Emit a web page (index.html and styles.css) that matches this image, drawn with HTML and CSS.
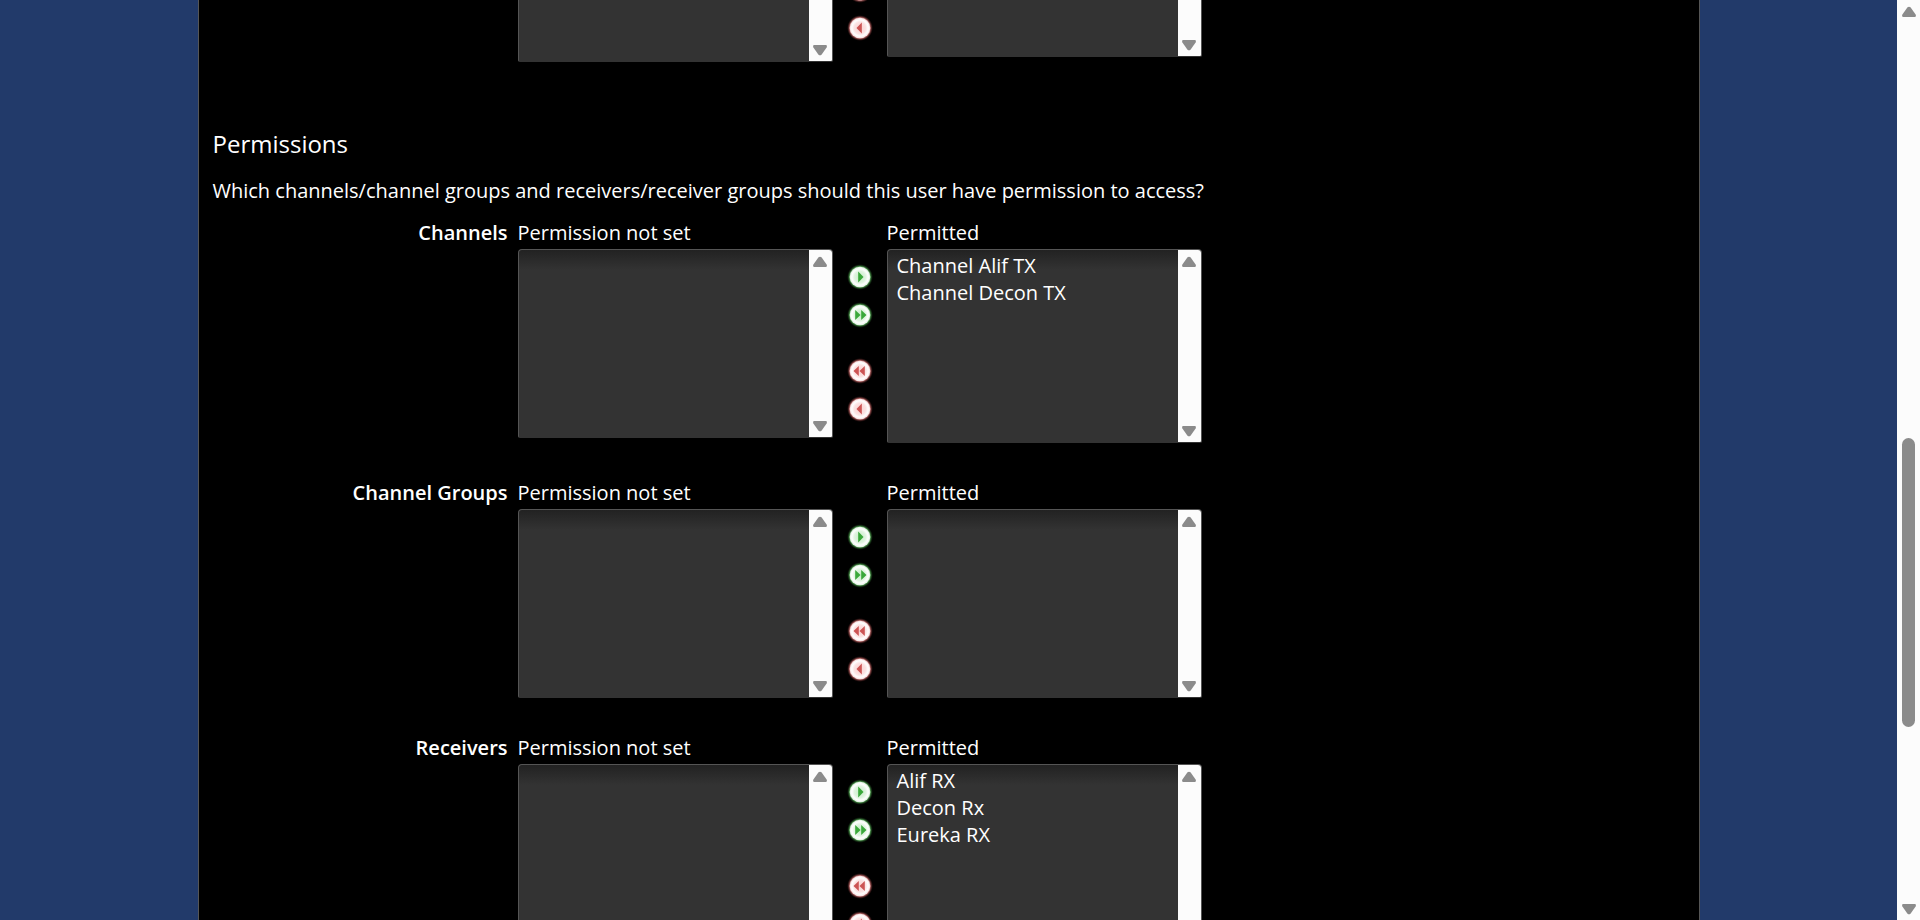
FILE: index.html
```html
<!DOCTYPE html>
<html lang="en">
<head>
<meta charset="utf-8">
<title>Permissions</title>
<link rel="stylesheet" href="styles.css">
</head>
<body>
<svg class="defs" aria-hidden="true">
  <defs>
    <radialGradient id="green-disc"><stop offset="0" stop-color="#c4ecc4"/><stop offset=".55" stop-color="#e0f4e0"/><stop offset=".8" stop-color="#ffffff"/><stop offset="1" stop-color="#dcecdc"/></radialGradient>
    <radialGradient id="red-disc"><stop offset="0" stop-color="#f8d2d2"/><stop offset=".55" stop-color="#fce2e2"/><stop offset=".8" stop-color="#ffffff"/><stop offset="1" stop-color="#f4dcdc"/></radialGradient>
    <radialGradient id="green-halo"><stop offset=".8" stop-color="#4c944c"/><stop offset="1" stop-color="#0a280a" stop-opacity="0"/></radialGradient>
    <radialGradient id="red-halo"><stop offset=".8" stop-color="#b06464"/><stop offset="1" stop-color="#3a0c0c" stop-opacity="0"/></radialGradient>
  </defs>
  <symbol id="add" viewBox="0 0 26 26"><circle cx="13" cy="13" r="13" fill="url(#green-halo)"/><circle cx="13" cy="13" r="10.3" fill="url(#green-disc)"/><path d="M11.2 7.600v10.800l5.300-5.400z" fill="#3aa83a"/></symbol>
  <symbol id="add-all" viewBox="0 0 26 26"><circle cx="13" cy="13" r="13" fill="url(#green-halo)"/><circle cx="13" cy="13" r="10.3" fill="url(#green-disc)"/><path d="M8.200 8v10l5.300-5zM14.200 8v10l5.300-5z" fill="#3aa83a"/></symbol>
  <symbol id="remove-all" viewBox="0 0 26 26"><circle cx="13" cy="13" r="13" fill="url(#red-halo)"/><circle cx="13" cy="13" r="10.3" fill="url(#red-disc)"/><path d="M11.800 8v10l-5.300-5zM17.800 8v10l-5.300-5z" fill="#cc5454"/></symbol>
  <symbol id="remove" viewBox="0 0 26 26"><circle cx="13" cy="13" r="13" fill="url(#red-halo)"/><circle cx="13" cy="13" r="10.3" fill="url(#red-disc)"/><path d="M14.800 7.600v10.800l-5.300-5.400z" fill="#cc5454"/></symbol>
  <symbol id="up" viewBox="0 0 16 12"><path d="M6.500 1.300Q8 0 9.500 1.300L14.600 8.600Q15.600 11 13.600 11H2.400Q.4 11 1.400 8.600Z" fill="#8b8b8b"/></symbol>
  <symbol id="down" viewBox="0 0 16 12"><path d="M6.500 10.700Q8 12 9.500 10.700L14.600 3.400Q15.600 1 13.600 1H2.400Q.4 1 1.400 3.400Z" fill="#8b8b8b"/></symbol>
</svg>
<div class="window">
  <div class="viewport">
    <main class="panel">
      <div class="row row-previous">
        <div class="listbox tall start">
          <select multiple aria-label="Available"></select>
          <span class="scrollbar"><svg><use href="#up"/></svg><svg><use href="#down"/></svg></span>
        </div>
        <div class="buttons">
          <button type="button" aria-label="Add"><svg><use href="#add"/></svg></button>
          <button type="button" aria-label="Add all"><svg><use href="#add-all"/></svg></button>
          <button type="button" class="apart" aria-label="Remove all"><svg><use href="#remove-all"/></svg></button>
          <button type="button" aria-label="Remove"><svg><use href="#remove"/></svg></button>
        </div>
        <div class="listbox">
          <select multiple aria-label="Selected"></select>
          <span class="scrollbar"><svg><use href="#up"/></svg><svg><use href="#down"/></svg></span>
        </div>
      </div>

      <h2>Permissions</h2>
      <p class="question">Which channels/channel groups and receivers/receiver groups should this user have permission to access?</p>

      <section class="row" aria-labelledby="channels">
        <h3 id="channels">Channels</h3>
        <label for="channels-unset">Permission not set</label>
        <label class="last" for="channels-set">Permitted</label>
        <div class="listbox start">
          <select id="channels-unset" multiple></select>
          <span class="scrollbar"><svg><use href="#up"/></svg><svg><use href="#down"/></svg></span>
        </div>
        <div class="buttons">
          <button type="button" aria-label="Add"><svg><use href="#add"/></svg></button>
          <button type="button" aria-label="Add all"><svg><use href="#add-all"/></svg></button>
          <button type="button" class="apart" aria-label="Remove all"><svg><use href="#remove-all"/></svg></button>
          <button type="button" aria-label="Remove"><svg><use href="#remove"/></svg></button>
        </div>
        <div class="listbox tall">
          <select id="channels-set" multiple><option>Channel Alif TX</option><option>Channel Decon TX</option></select>
          <span class="scrollbar"><svg><use href="#up"/></svg><svg><use href="#down"/></svg></span>
        </div>
      </section>

      <section class="row" aria-labelledby="groups">
        <h3 id="groups">Channel Groups</h3>
        <label for="groups-unset">Permission not set</label>
        <label class="last" for="groups-set">Permitted</label>
        <div class="listbox start">
          <select id="groups-unset" multiple></select>
          <span class="scrollbar"><svg><use href="#up"/></svg><svg><use href="#down"/></svg></span>
        </div>
        <div class="buttons">
          <button type="button" aria-label="Add"><svg><use href="#add"/></svg></button>
          <button type="button" aria-label="Add all"><svg><use href="#add-all"/></svg></button>
          <button type="button" class="apart" aria-label="Remove all"><svg><use href="#remove-all"/></svg></button>
          <button type="button" aria-label="Remove"><svg><use href="#remove"/></svg></button>
        </div>
        <div class="listbox">
          <select id="groups-set" multiple></select>
          <span class="scrollbar"><svg><use href="#up"/></svg><svg><use href="#down"/></svg></span>
        </div>
      </section>

      <section class="row" aria-labelledby="receivers">
        <h3 id="receivers">Receivers</h3>
        <label for="receivers-unset">Permission not set</label>
        <label class="last" for="receivers-set">Permitted</label>
        <div class="listbox start">
          <select id="receivers-unset" multiple></select>
          <span class="scrollbar"><svg><use href="#up"/></svg><svg><use href="#down"/></svg></span>
        </div>
        <div class="buttons">
          <button type="button" aria-label="Add"><svg><use href="#add"/></svg></button>
          <button type="button" aria-label="Add all"><svg><use href="#add-all"/></svg></button>
          <button type="button" class="apart" aria-label="Remove all"><svg><use href="#remove-all"/></svg></button>
          <button type="button" aria-label="Remove"><svg><use href="#remove"/></svg></button>
        </div>
        <div class="listbox tall">
          <select id="receivers-set" multiple><option>Alif RX</option><option>Decon Rx</option><option>Eureka RX</option></select>
          <span class="scrollbar"><svg><use href="#up"/></svg><svg><use href="#down"/></svg></span>
        </div>
      </section>
    </main>
  </div>
  <div class="scrollbar page-scrollbar" aria-hidden="true">
    <svg><use href="#up"/></svg>
    <div class="track"><span class="thumb"></span></div>
    <svg><use href="#down"/></svg>
  </div>
</div>
</body>
</html>
```
FILE: styles.css
```css
* {
  box-sizing: border-box;
}

body {
  margin: 0;
  background: #223a6a;
  color: #fff;
  font: 500 20px/27px "Trebuchet MS", "Open Sans", "Noto Sans", sans-serif;
}

.defs {
  position: absolute;
  width: 0;
  height: 0;
}

.window {
  display: flex;
  height: 100vh;
  overflow: hidden;
}

.viewport {
  flex: 1;
  overflow: hidden;
}

.panel {
  max-width: 1502px;
  min-height: 100%;
  margin: 0 auto;
  padding: 0 14px;
  overflow: hidden;
  background: #000;
  border: solid #555;
  border-width: 0 1px;
}

h2 {
  margin: 0 0 17px;
  font-size: 24px;
  font-weight: 400;
  line-height: 32px;
}

.question {
  margin: 0 0 13px;
}

.row {
  display: grid;
  grid-template-columns: 305px 315px 54px 315px;
  grid-template-rows: 32px auto;
  margin-bottom: 34px;
}

/* The list above, scrolled mostly out of view */
.row-previous {
  grid-template-rows: auto;
  margin-top: -132px;
  margin-bottom: 66px;
}

h3 {
  margin: 0;
  padding-right: 10px;
  font-size: 20px;
  font-weight: 600;
  line-height: 32px;
  text-align: right;
}

label {
  line-height: 32px;
}

.last {
  grid-column: 4;
}

.start {
  grid-column: 2;
}

.listbox {
  display: flex;
  align-self: start;
  height: 189px;
  overflow: hidden;
  border: 1px solid #555;
  border-bottom-color: #333;
  border-radius: 4px 4px 2px 2px;
  background: #333 linear-gradient(#222, #333) no-repeat 0 0 / 100% 20px;
}

.tall {
  height: 194px;
}

select {
  flex: 1;
  min-width: 0;
  padding: 2px 0;
  overflow: hidden;
  border: 0;
  outline: 0;
  background: none;
  color: inherit;
  font: inherit;
}

option {
  min-height: 27px;
  padding: 0 9px;
  line-height: 27px;
}

.scrollbar {
  display: flex;
  flex-direction: column;
  justify-content: space-between;
  align-items: center;
  width: 23px;
  padding: 6px 0 5px;
  background: #fcfcfc;
}

.scrollbar svg {
  width: 16px;
  height: 12px;
}

.page-scrollbar {
  gap: 6px;
}

.track {
  display: flex;
  flex: 1;
  align-items: flex-start;
  padding-top: 414px;
}

.thumb {
  width: 13px;
  height: 289px;
  border-radius: 7px;
  background: #8b8b8b;
}

.buttons {
  display: flex;
  flex-direction: column;
  align-items: center;
  gap: 12px;
  padding-top: 15px;
}

button {
  display: block;
  padding: 0;
  border: 0;
  background: none;
}

.apart {
  margin-top: 18px;
}

button svg {
  display: block;
  width: 26px;
  height: 26px;
}
```
